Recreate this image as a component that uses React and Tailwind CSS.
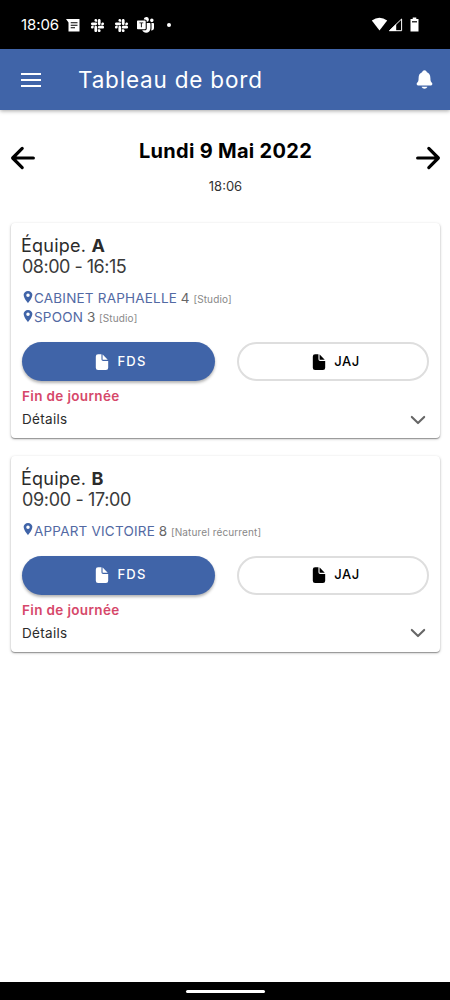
import React from 'react';
import {
  IoArrowBack,
  IoArrowForward,
  IoChevronDown,
  IoDocument,
  IoLocationSharp,
  IoNotifications,
} from 'react-icons/io5';
import { FaSlack } from 'react-icons/fa';
import { BsMicrosoftTeams } from 'react-icons/bs';

const teams = [
  {
    name: 'A',
    hours: '08:00 - 16:15',
    hoursStyle: 'tracking-[-0.5px]',
    places: [
      { name: 'CABINET RAPHAELLE', count: 4, type: 'Studio' },
      { name: 'SPOON', count: 3, type: 'Studio' },
    ],
  },
  {
    name: 'B',
    hours: '09:00 - 17:00',
    hoursStyle: 'tracking-[-0.35px]',
    places: [{ name: 'APPART VICTOIRE', count: 8, type: 'Naturel récurrent' }],
  },
];

const StatusBar = () => (
  <div className="h-[49px] bg-black text-white flex items-center px-[21px] shrink-0">
    <span className="pt-[1px] text-[15px] tracking-[-0.1px] w-[45px]">18:06</span>
    {/* Messages */}
    <svg width="14" height="13" viewBox="0 0 14 13" className="shrink-0 mt-[1px]">
      <path d="M0 0h13.5v12.5H2.5V3.5z" fill="currentColor" />
      <path d="M4.7 3.7h6.8M4.7 6.2h6.8M4.7 8.7h4.3" stroke="#000" strokeWidth="1.1" />
    </svg>
    <FaSlack size={15} className="ml-[10px] mt-[1px]" />
    <FaSlack size={15} className="ml-[9px] mt-[1px]" />
    <BsMicrosoftTeams size={17} className="ml-[8px] mt-[1px]" />
    <span className="w-[4px] h-[4px] rounded-full bg-white ml-[13px] mt-[1px]"></span>

    {/* Wifi, signal, battery */}
    <svg width="50" height="15" viewBox="0 0 50 15" className="ml-auto mr-[8px] shrink-0">
      <path d="M.8 3.5Q8.5-2 16.2 3.5L8.5 13.5z" fill="currentColor" />
      <path d="M18.5 13.7 30.6 2v11.7z" fill="none" stroke="currentColor" strokeWidth="1" />
      <path d="M18 14 25.2 7v7z" fill="currentColor" />
      <path d="M39.5 2h2.2V.6h3.6V2h2.2v12.5h-8z" fill="currentColor" />
      <path d="M41 4.8h5" stroke="#000" strokeWidth="1.2" />
    </svg>
  </div>
);

const Header = () => (
  <div className="h-[61px] bg-[#4064a8] text-white flex items-center shrink-0 shadow-[0_1px_4px_rgba(0,0,0,0.35)]">
    <button className="ml-[21px] w-[20px] flex flex-col gap-[4px]">
      <span className="h-[2px] w-full bg-white"></span>
      <span className="h-[2px] w-full bg-white"></span>
      <span className="h-[2px] w-full bg-white"></span>
    </button>
    <h1 className="ml-[37px] text-[22.5px] tracking-[0.8px]">Tableau de bord</h1>
    <IoNotifications size={21} className="ml-auto mr-[15px]" />
  </div>
);

const DateNav = () => (
  <div className="flex justify-between pl-[6px] pr-[5px] pt-[26px] h-[113px] shrink-0 text-black">
    <IoArrowBack size={34} className="mt-[5px]" />
    <div className="text-center">
      <h2 className="mt-[1px] text-[20px] leading-[28px] font-bold tracking-[0.3px]">Lundi 9 Mai 2022</h2>
      <p className="mt-[11px] text-[13px] leading-[20px] text-[#333]">18:06</p>
    </div>
    <IoArrowForward size={34} className="mt-[5px]" />
  </div>
);

const TeamCard = ({ team }) => (
  <div className="ml-[11px] mr-[10px] px-[11px] pt-[12px] rounded-[4px] bg-white text-[#2b2b2b] shadow-[0_1px_3px_rgba(0,0,0,0.25),0_1px_1px_rgba(0,0,0,0.3)]">
    <div className="text-[18px] leading-[21px]">
      <p className="-ml-[1px] tracking-[0.25px]">
        Équipe. <b>{team.name}</b>
      </p>
      <p className={clsxHours(team)}>{team.hours}</p>
    </div>

    <div className="mt-[12px]">
      {team.places.map((place) => (
        <p key={place.name} className="flex items-center h-[19px] text-[13.5px] whitespace-pre">
          <IoLocationSharp size={14} className="-ml-[1px] mr-[-1px] mb-[4px] text-[#4064a8]" />
          <span className="text-[#5269a3] tracking-[0.2px]">{place.name}</span>
          <span className="text-[#666]"> {place.count} </span>
          <span className="text-[10px] text-[#888] pt-[2px] tracking-[0.13px]">[{place.type}]</span>
        </p>
      ))}
    </div>

    <div className="mt-[15px] flex gap-[22px]">
      <button className="w-[193px] h-[39px] pl-[3px] rounded-full bg-[#4064a8] text-white text-[13px] font-medium tracking-[1.2px] flex items-center justify-center shadow-[0_2px_3px_rgba(0,0,0,0.3)]">
        <IoDocument size={18} className="mr-[6px]" />
        FDS
      </button>
      <button className="w-[192px] h-[39px] pl-[4px] rounded-full border-2 border-[#dedede] text-black text-[13px] font-medium tracking-[0.6px] flex items-center justify-center">
        <IoDocument size={18} className="mr-[6px]" />
        JAJ
      </button>
    </div>

    <p className="mt-[5px] text-[13.5px] leading-[20px] font-semibold tracking-[0.35px] text-[#d6486a]">Fin de journée</p>
    <div className="flex items-center justify-between h-[32px] pb-[5px] text-[13.5px]">
      <span className="tracking-[0.3px]">Détails</span>
      <IoChevronDown size={22} className="text-[#666]" />
    </div>
  </div>
);

function clsxHours(team) {
  return `text-[#3a3a3a] ${team.hoursStyle}`;
}

const App = () => {
  return (
    <div className="w-[450px] h-[1000px] bg-white flex flex-col overflow-hidden font-['Inter',sans-serif]">
      <StatusBar />
      <Header />
      <DateNav />
      <div className="flex flex-col gap-[17.5px]">
        {teams.map((team) => (
          <TeamCard key={team.name} team={team} />
        ))}
      </div>
      <div className="mt-auto h-[18px] bg-black flex items-center justify-center">
        <span className="w-[79px] h-[3px] rounded-full bg-white"></span>
      </div>
    </div>
  );
};

export default App;
